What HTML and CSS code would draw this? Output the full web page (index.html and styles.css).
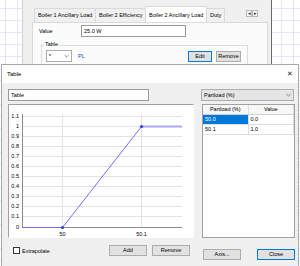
FILE: index.html
```html
<!DOCTYPE html>
<html>
<head>
<meta charset="utf-8">
<link rel="stylesheet" href="styles.css">
</head>
<body>
<div class="bgwin">
  <div class="tabs">
    <div class="tab t1">Boiler 1 Ancillary Load</div>
    <div class="tab t2">Boiler 2 Efficiency</div>
    <div class="tab t3 sel">Boiler 2 Ancillary Load</div>
    <div class="tab t4">Duty</div>
    <div class="scroll"><span>&#9666;</span><span>&#9656;</span></div>
  </div>
  <div class="tabpage">
    <div class="valrow"><span class="lbl">Value</span><div class="input val">25.0 W</div></div>
    <div class="group">
      <span class="legend">Table</span>
      <div class="grow">
        <div class="combo small"><span>*</span><svg class="chev" viewBox="0 0 6 4"><path d="M0.5 0.8 L3 3.2 L5.5 0.8" fill="none" stroke="#555" stroke-width="0.8"/></svg></div>
        <span class="pl">PL</span>
        <div class="btn focus bedit">Edit</div>
        <div class="btn bremove">Remove</div>
      </div>
    </div>
  </div>
</div>

<div class="dialog">
  <div class="titlebar"><span class="title">Table</span><span class="close">&#x2715;</span></div>
  <div class="dbody">
    <div class="lcol">
      <div class="input name">Table</div>
      <div class="chart">
        <svg width="186" height="134" viewBox="0 0 186 134">
          <g stroke="#e3e3e3" stroke-width="1">
            <line x1="14" y1="12.5" x2="174" y2="12.5"/>
            <line x1="14" y1="22.5" x2="174" y2="22.5"/>
            <line x1="14" y1="32.5" x2="174" y2="32.5"/>
            <line x1="14" y1="42.5" x2="174" y2="42.5"/>
            <line x1="14" y1="52.5" x2="174" y2="52.5"/>
            <line x1="14" y1="62.5" x2="174" y2="62.5"/>
            <line x1="14" y1="72.5" x2="174" y2="72.5"/>
            <line x1="14" y1="82.5" x2="174" y2="82.5"/>
            <line x1="14" y1="92.5" x2="174" y2="92.5"/>
            <line x1="14" y1="102.5" x2="174" y2="102.5"/>
            <line x1="14" y1="112.5" x2="174" y2="112.5"/>
            <line x1="54.5" y1="10" x2="54.5" y2="123"/>
            <line x1="133.5" y1="10" x2="133.5" y2="123"/>
          </g>
          <line x1="14.5" y1="10" x2="14.5" y2="124" stroke="#8c8c8c"/>
          <line x1="14" y1="123.5" x2="174" y2="123.5" stroke="#8c8c8c"/>
          <polyline points="14,123.5 54.5,123.5 133.5,22.5" fill="none" stroke="#7070ff" stroke-width="1"/>
          <line x1="133.5" y1="22.5" x2="174" y2="22.5" stroke="#a8a8ff" stroke-width="2"/>
          <circle cx="54.5" cy="123.5" r="1.6" fill="#3b3bf0"/>
          <circle cx="133.5" cy="22.5" r="1.6" fill="#3b3bf0"/>
          <g class="ylab" text-anchor="end">
            <text x="11" y="14">1.1</text>
            <text x="11" y="24">1</text>
            <text x="11" y="34">0.9</text>
            <text x="11" y="44">0.8</text>
            <text x="11" y="54">0.7</text>
            <text x="11" y="64">0.6</text>
            <text x="11" y="74">0.5</text>
            <text x="11" y="84">0.4</text>
            <text x="11" y="94">0.3</text>
            <text x="11" y="104">0.2</text>
            <text x="11" y="114">0.1</text>
            <text x="11" y="125">0</text>
          </g>
          <g class="ylab" text-anchor="middle">
            <text x="54.5" y="131.5">50</text>
            <text x="133.5" y="131.5">50.1</text>
          </g>
        </svg>
      </div>
      <div class="lrow">
        <label class="chk"><span class="box"></span>Extrapolate</label>
        <div class="btns">
          <div class="btn wbtn">Add</div>
          <div class="btn wbtn">Remove</div>
        </div>
      </div>
    </div>
    <div class="rcol">
      <div class="combo big"><span>Partload (%)</span><svg class="chev" viewBox="0 0 6 4"><path d="M0.5 0.8 L3 3.2 L5.5 0.8" fill="none" stroke="#555" stroke-width="0.8"/></svg></div>
      <div class="table">
        <div class="trow head"><div class="cell">Partload (%)</div><div class="cell">Value</div></div>
        <div class="trow"><div class="cell selc">50.0</div><div class="cell">0.0</div></div>
        <div class="trow"><div class="cell">50.1</div><div class="cell">1.0</div></div>
      </div>
      <div class="rrow">
        <div class="btn wbtn">Axis...</div>
        <div class="btn wbtn focus">Close</div>
      </div>
    </div>
  </div>
</div>
</body>
</html>
```
FILE: styles.css
```css
* { box-sizing: border-box; }
body {
  margin: 0;
  width: 300px;
  height: 266px;
  overflow: hidden;
  position: relative;
  font-family: "Liberation Sans", Arial, sans-serif;
  font-size: 5.5px;
  color: #000;
  background-color: #fff;
  background-image:
    linear-gradient(to right, #e6e6f6 1px, transparent 1px),
    linear-gradient(to bottom, #e6e6f6 1px, transparent 1px);
  background-size: 12px 12px;
  background-position: 5px 8px;
}

/* background window */
.bgwin {
  position: absolute;
  left: 22px;
  top: 0;
  width: 250px;
  height: 70px;
  background: #f0f0f0;
  border-left: 1px solid #cfcfcf;
  border-right: 1px solid #6a6a6a;
  padding: 6px 3px 0 9px;
}
.tabs {
  display: flex;
  align-items: flex-end;
  height: 16px;
  padding-left: 2px;
}
.tab {
  height: 14px;
  line-height: 13px;
  padding: 0 3px;
  border: 1px solid #d9d9d9;
  border-bottom: none;
  background: #f0f0f0;
  white-space: nowrap;
  margin-right: -1px;
}
.t1 { width: 62px; }
.t2 { width: 51px; }
.t3 { width: 62px; }
.t4 { width: 19px; }
.tab.sel {
  height: 16px;
  background: #fff;
  line-height: 16px;
  position: relative;
  z-index: 1;
}
.scroll {
  margin-left: auto;
  margin-right: 10px;
  margin-bottom: 5px;
  display: flex;
}
.scroll span {
  width: 6px;
  height: 7px;
  border: 1px solid #bbb;
  background: #f4f4f4;
  font-size: 5px;
  line-height: 5px;
  text-align: center;
  color: #333;
}
.tabpage {
  border: 1px solid #d9d9d9;
  background: #fbfbfb;
  height: 60px;
  padding: 2px 6px 0 6px;
}
.valrow {
  display: flex;
  align-items: center;
  height: 12px;
}
.lbl { width: 42px; }
.input {
  background: #fff;
  border: 1px solid #9a9a9a;
  height: 12px;
  line-height: 10px;
  padding-left: 2px;
}
.input.val { width: 105px; }
.group {
  margin: 8px 13px 0 2px;
  border: 1px solid #dcdcdc;
  height: 30px;
  position: relative;
  padding: 4px 6px 0 4px;
}
.legend {
  position: absolute;
  left: 2px;
  top: -5px;
  background: #fbfbfb;
  padding: 0 1px;
}
.grow {
  display: flex;
  align-items: center;
  height: 12px;
}
.combo {
  display: flex;
  align-items: center;
  justify-content: space-between;
  border: 1px solid #acacac;
  height: 12px;
  padding: 0 2px;
}
.combo.small { width: 26px; background: #fff; }
.chev { width: 5px; height: 4px; }
.pl { margin-left: 6px; color: #2c4c8c; }
.btn {
  height: 11px;
  border: 1px solid #adadad;
  background: #e1e1e1;
  text-align: center;
  line-height: 9px;
}
.btn.focus { border-color: #0078d7; }
.bedit { width: 24px; margin-left: auto; }
.bremove { width: 25px; margin-left: 4px; }

/* dialog */
.dialog {
  position: absolute;
  left: 1px;
  top: 64px;
  width: 298px;
  height: 204px;
  background: #f0f0f0;
  border: 1px solid #a8a8a8;
}
.titlebar {
  height: 18px;
  background: #fff;
  display: flex;
  align-items: center;
  justify-content: space-between;
  padding: 0 5px 0 5px;
  font-size: 6px;
}
.close { font-size: 7px; color: #222; }
.dbody {
  display: flex;
  gap: 8px;
  padding: 6px 2px 0 6px;
}
.lcol { width: 186px; display: flex; flex-direction: column; }
.rcol { width: 93px; display: flex; flex-direction: column; }
.input.name { width: 141px; height: 12px; }
.chart {
  margin-top: 3px;
  width: 186px;
  height: 134px;
  background: #fff;
  border-top: 1px solid #a0a0a0;
  border-left: 1px solid #a0a0a0;
  border-right: 1px solid #fff;
  border-bottom: 1px solid #fff;
  overflow: hidden;
}
.chart svg { display: block; margin: -1px 0 0 -1px; }
.ylab text { font-family: "Liberation Sans", Arial, sans-serif; font-size: 5.5px; fill: #000; }
.lrow {
  margin-top: 7px;
  display: flex;
  align-items: center;
  height: 11px;
}
.chk { display: flex; align-items: center; padding-left: 5px; }
.box {
  width: 7px;
  height: 7px;
  border: 1px solid #333;
  background: #fff;
  margin-right: 2px;
}
.btns { margin-left: auto; margin-right: 4px; display: flex; gap: 5px; }
.wbtn { width: 38px; }
.combo.big {
  width: 93px;
  background: #e5e5e5;
  border-color: #adadad;
  margin-left: -1px;
}
.table {
  margin-top: 3px;
  height: 134px;
  background: #fff;
  border: 1px solid #a0a0a0;
}
.trow { display: flex; height: 10px; border-bottom: 1px solid #e0e0e0; }
.trow.head { background: #f7f7f7; border-bottom: 1px solid #d0d0d0; }
.cell {
  width: 46px;
  line-height: 9px;
  padding-left: 2px;
  border-right: 1px solid #e0e0e0;
}
.head .cell { text-align: center; padding-left: 0; }
.cell.selc { background: #0078d7; color: #fff; }
.rrow {
  margin-top: 11px;
  display: flex;
  justify-content: space-between;
  padding-left: 1px;
}
```
